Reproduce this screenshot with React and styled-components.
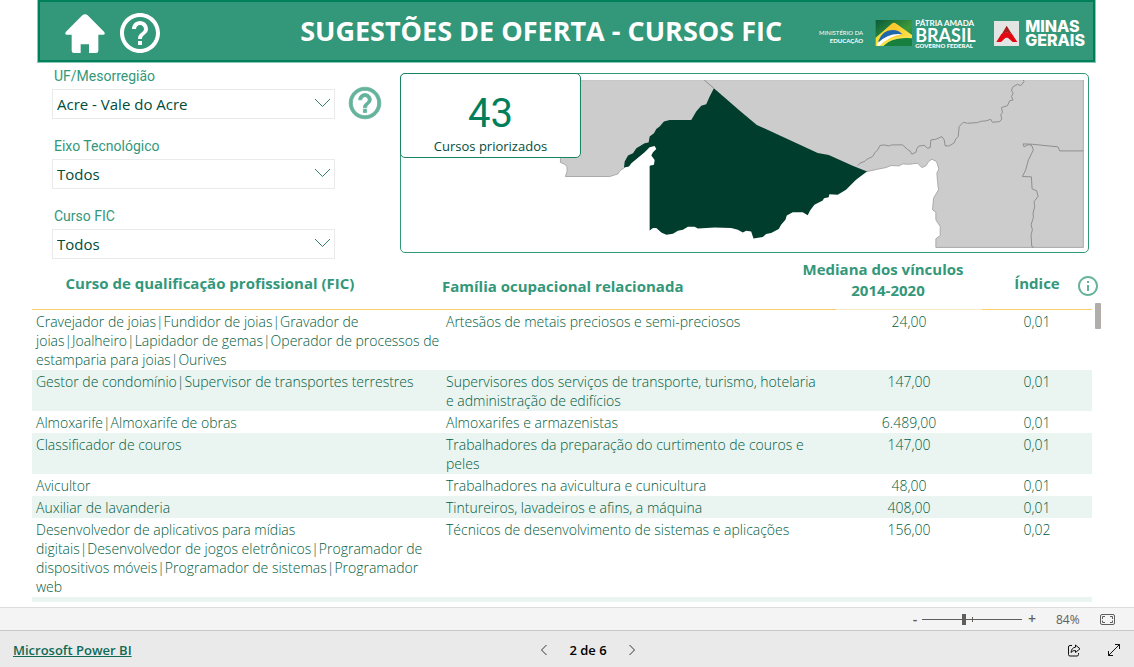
import React, { useState } from 'react';
import styled, { createGlobalStyle } from 'styled-components';
import { MdHelpOutline, MdInfoOutline } from 'react-icons/md';

const GlobalStyle = createGlobalStyle`
  * {
    box-sizing: border-box;
  }

  body {
    margin: 0;
    background-color: #fff;
    font-family: 'Open Sans', 'Noto Sans', sans-serif;
  }

  button {
    padding: 0;
    border: none;
    background: none;
    color: inherit;
    font: inherit;
    cursor: pointer;
  }

  svg {
    display: block;
  }
`;

const Page = styled.div`
  display: flex;
  flex-direction: column;
  height: 100vh;
`;

const Report = styled.main`
  display: flex;
  flex-direction: column;
  flex: 1;
  min-height: 0;
  padding-bottom: 5px;
`;

const HeaderContainer = styled.header`
  display: flex;
  align-items: center;
  height: 62px;
  margin: 0 39px 0 38px;
  padding: 4px 8px 0 24px;
  border: 2px solid #00805a;
  outline: 1px solid #8cc8b5;
  background-color: #33977a;
  color: #fff;
`;

const HeaderButtons = styled.div`
  display: flex;
  align-items: center;
  gap: 10px;
`;

const Title = styled.h1`
  flex: 1;
  margin: 0;
  padding: 0 37px 4px 0;
  font-size: 27px;
  line-height: 36px;
  font-weight: 700;
  text-align: right;
  white-space: nowrap;
`;

const Logos = styled.div`
  display: flex;
  align-items: center;
`;

const Ministry = styled.div`
  margin-right: 12px;
  padding-top: 8px;
  font-family: Lato, sans-serif;
  font-size: 6px;
  line-height: 8px;
  text-align: right;
  white-space: nowrap;
`;

const Brazil = styled.div`
  display: flex;
  flex-direction: column;
  width: 63px;
  margin: 0 16px 0 2px;
  font-family: Lato, sans-serif;
  white-space: nowrap;

  .motto {
    font-size: 8px;
    line-height: 10px;
    font-weight: 700;
  }

  .country {
    font-size: 18px;
    line-height: 15px;
    font-weight: 700;
  }

  .government {
    font-size: 6px;
    line-height: 6px;
    font-weight: 900;
  }
`;

const Minas = styled.div`
  margin-left: 6px;
  font-family: Inter, sans-serif;
  font-size: 16px;
  line-height: 14px;
  font-weight: 800;
`;

const Overview = styled.section`
  display: flex;
  align-items: flex-start;
  padding: 11px 45px 0 52px;
`;

const Filters = styled.div`
  display: flex;
  flex-direction: column;
  gap: 18px;
  width: 283px;
  margin-top: -6px;
`;

const Field = styled.div`
  label {
    display: block;
    height: 22px;
    padding: 0 2px;
    color: #33977a;
    font-family: Roboto, sans-serif;
    font-size: 14px;
    line-height: 18px;
  }
`;

const SelectBox = styled.div`
  position: relative;

  select {
    display: block;
    width: 100%;
    height: 30px;
    padding: 0 30px 0 4px;
    border: 1px solid #eaeaea;
    border-radius: 0;
    background-color: #fff;
    color: #004d3a;
    font-family: inherit;
    font-size: 15px;
    appearance: none;
  }

  svg {
    position: absolute;
    top: 9px;
    right: 4px;
    pointer-events: none;
  }
`;

const FilterHelp = styled.button`
  margin: 11px 16px 0 11px;
  color: #66b39c;

  path:first-child {
    stroke: none;
  }

  path:last-child {
    stroke: currentColor;
    stroke-width: 0.5;
  }
`;

const MapPanel = styled.div`
  position: relative;
  flex: 1;
  padding: 6px 4px 4px 6px;
  border: 1px solid #33977a;
  border-radius: 5px;

  > svg {
    width: 100%;
    height: auto;
  }
`;

const CountCard = styled.div`
  position: absolute;
  top: -1px;
  left: -1px;
  width: 181px;
  height: 85px;
  padding-top: 19px;
  border: 1px solid #1a8364;
  border-radius: 5px;
  background-color: #fff;
  text-align: center;

  strong {
    display: block;
    color: #00805a;
    font-family: Roboto, sans-serif;
    font-size: 40px;
    line-height: 42px;
    font-weight: 400;
  }

  span {
    display: block;
    color: #004d3a;
    font-size: 13px;
    line-height: 22px;
  }
`;

const TableArea = styled.section`
  position: relative;
  display: flex;
  flex: 1;
  min-height: 0;
  margin: 0 33px 0 32px;
  overflow: hidden;
`;

const Table = styled.table`
  flex: 1;
  align-self: flex-start;
  width: 100%;
  border-collapse: collapse;
  table-layout: fixed;
  color: #005c3e;
  font-size: 14px;
  line-height: 19px;

  .course {
    width: 410px;
  }

  .median {
    width: 146px;
  }

  .index {
    width: 110px;
  }

  th {
    height: 50px;
    padding: 0;
    border-bottom: 1px solid #fbce6b;
    color: #33977a;
    font-size: 15px;
    line-height: 21px;
    font-weight: 700;
  }

  th:nth-child(1) {
    padding-right: 54px;
  }

  th:nth-child(2) {
    padding-top: 6px;
    text-align: left;
  }

  th:nth-child(3) {
    padding-bottom: 7px;
    border-bottom-color: #fdebc4;
  }

  th span {
    display: block;
    margin-left: -52px;
    white-space: nowrap;
  }

  .period {
    margin-left: -42px;
  }

  td {
    padding: 2px 0 1px 4px;
    font-weight: 300;
    vertical-align: top;
  }

  td:nth-child(2) {
    padding-right: 12px;
  }

  td:nth-child(n + 3) {
    padding-left: 0;
    text-align: center;
  }

  tbody tr:nth-child(even) {
    background-color: #eaf4f1;
  }
`;

const InfoButton = styled.button`
  position: absolute;
  top: 15px;
  right: 1px;
  color: #66b39c;
`;

const ScrollThumb = styled.div`
  flex: none;
  width: 6px;
  height: 26px;
  margin: 44px 0 0 3px;
  border-radius: 1px;
  background-color: #b0adab;
`;

const ZoomBar = styled.div`
  display: flex;
  align-items: center;
  justify-content: flex-end;
  height: 23px;
  padding-right: 19px;
  border-top: 1px solid #dcdcdc;
  background-color: #f4f4f4;
  color: #605e5c;
  font-size: 12px;

  .step {
    width: 10px;
    font-size: 14px;
    line-height: 20px;
    font-weight: 600;
  }

  output {
    width: 24px;
    margin: 0 20px 0 19px;
  }
`;

const ZoomSlider = styled.input`
  width: 100px;
  height: 12px;
  margin: 0 5px 0 2px;
  background:
    linear-gradient(#605e5c, #605e5c) 50px 50% / 1px 5px no-repeat,
    linear-gradient(#605e5c, #605e5c) 0 50% / 100% 1px no-repeat;
  appearance: none;

  &::-webkit-slider-thumb {
    width: 4px;
    height: 11px;
    background-color: #605e5c;
    appearance: none;
  }
`;

const Footer = styled.footer`
  display: grid;
  grid-template-columns: 1fr auto 1fr;
  align-items: center;
  height: 37px;
  padding: 2px 13px 0;
  border-top: 1px solid #c8c8c8;
  background-color: #eaeaea;
  font-size: 13px;

  a {
    color: #0f6a58;
    font-weight: 600;
  }
`;

const Pager = styled.nav`
  display: flex;
  align-items: center;
  gap: 21px;
  margin-left: 42px;
  color: #000;
  font-weight: 600;
`;

const FooterActions = styled.div`
  display: flex;
  justify-content: flex-end;
  gap: 26px;
`;

const filters = [
  { id: 'regiao', label: 'UF/Mesorregião', value: 'Acre - Vale do Acre' },
  { id: 'eixo', label: 'Eixo Tecnológico', value: 'Todos' },
  { id: 'curso', label: 'Curso FIC', value: 'Todos' },
];

const rows = [
  [
    'Cravejador de joias|Fundidor de joias|Gravador de joias|Joalheiro|Lapidador de gemas|Operador de processos de estamparia para joias|Ourives',
    'Artesãos de metais preciosos e semi-preciosos',
    '24,00',
    '0,01',
  ],
  [
    'Gestor de condomínio|Supervisor de transportes terrestres',
    'Supervisores dos serviços de transporte, turismo, hotelaria e administração de edifícios',
    '147,00',
    '0,01',
  ],
  ['Almoxarife|Almoxarife de obras', 'Almoxarifes e armazenistas', '6.489,00', '0,01'],
  [
    'Classificador de couros',
    'Trabalhadores da preparação do curtimento de couros e peles',
    '147,00',
    '0,01',
  ],
  ['Avicultor', 'Trabalhadores na avicultura e cunicultura', '48,00', '0,01'],
  ['Auxiliar de lavanderia', 'Tintureiros, lavadeiros e afins, a máquina', '408,00', '0,01'],
  [
    'Desenvolvedor de aplicativos para mídias digitais|Desenvolvedor de jogos eletrônicos|Programador de dispositivos móveis|Programador de sistemas|Programador web',
    'Técnicos de desenvolvimento de sistemas e aplicações',
    '156,00',
    '0,02',
  ],
  ['\u00a0', '', '', ''],
];

const HomeIcon = () => (
  <svg width="42" height="41" viewBox="100 38 126 123" fill="currentColor">
    <path d="M155 45q8-7 16 0l49 49q6 8-3 9h-14v48q0 7-7 7h-21v-26h-25v26h-20q-7 0-7-7v-48h-14q-9-1-3-9z" />
  </svg>
);

const FlagIcon = () => (
  <svg width="38" height="28" viewBox="0 0 114 84">
    <defs>
      <linearGradient id="flagGreen" x1="0" y1="0" x2="1" y2="1">
        <stop offset="0" stopColor="#0a5a3a" />
        <stop offset=".6" stopColor="#3f9a3c" />
        <stop offset="1" stopColor="#0f7a3e" />
      </linearGradient>
      <linearGradient id="flagGold" x1="0" y1="0" x2="1" y2="0">
        <stop offset="0" stopColor="#f3e23a" />
        <stop offset=".5" stopColor="#fcc62c" />
        <stop offset="1" stopColor="#fbe54e" />
      </linearGradient>
    </defs>
    <path d="M2 3h109v78H2z" fill="url(#flagGreen)" />
    <path d="M2 56L50 14q7-5 14 0l47 34v12L60 64 14 81H2z" fill="url(#flagGold)" />
    <path d="M10 66Q22 34 52 33q20 0 30 13Q44 46 14 76z" fill="#1f66ad" />
    <path d="M8 72Q42 40 82 46 46 50 16 80H6z" fill="#fff" />
    <path d="M20 81q30-28 91-24v24z" fill="#17803f" />
    <path d="M14 81q30-35 97-29v6q-60-5-86 23z" fill="#f7e04a" />
  </svg>
);

const MinasIcon = () => (
  <svg width="25" height="25" viewBox="0 0 75 75">
    <path d="M0 0h75v75H0z" fill="#e3e5e5" />
    <path d="M38 14l16 26-16-6-15 6z" fill="#a91d18" />
    <path d="M22 39l16 8 16-8 16 24H56L38 47 21 63H7z" fill="#e30613" />
    <path d="M38 33l16 6v10L38 50 22 49V39z" fill="#e30613" />
  </svg>
);

const Chevron = () => (
  <svg width="17" height="10" viewBox="0 0 17 10" fill="none" stroke="#33806a">
    <path d="M1 1l7.500 7.500L16 1" />
  </svg>
);

const RegionMap = () => (
  <svg viewBox="36 45 2034 504" role="img" aria-label="Mapa do Vale do Acre">
    <path
      d="M490 44H2068V548H1625V522L1638 512 1638 485 1625 465V442L1615 435 1618 400 1633 375 1630 350 1628 325 1634 312 1627 290 1613 283 1603 290 1595 303 1583 308 1570 295 1545 298 1525 297 1515 303 1490 302 1475 308 1450 313 1418 320 1000 250 765 232 740 243 700 285 690 308 675 318 670 327 645 335H512L517 320V305L508 297 497 293V280z"
      fill="#ccc"
      stroke="#aaa"
      strokeWidth="3"
    />
    <path
      d="M958 70L1035 137 1087 180 1270 264 1303 270 1375 303 1418 320 1385 345 1355 375 1330 390 1305 388 1303 397 1289 400 1285 407 1260 420 1247 437 1240 451 1225 442 1195 442 1177 452 1173 465 1160 480 1153 493 1130 505 1115 508 1105 517 1077 521 1070 500 1055 498 1045 503 1030 495 1010 490 960 488 910 491 900 486 880 486 865 495 850 498 835 507 815 510 800 503 785 490 775 490 765 497V303L778 300 780 285 770 272 775 262 785 252 780 243 765 247 750 262 710 295 703 305 688 308 690 290 700 272 715 265 725 250 750 235 762 233 765 215 778 205 785 192 795 185 808 170 825 165H890L905 140 920 122 935 118 945 95z"
      fill="#003d2c"
    />
    <g fill="none" stroke="#8f8f8f" strokeWidth="3" strokeLinejoin="round">
      <path d="M928 44L958 70" />
      <path d="M1390 302L1397 295 1412 289 1418 283 1435 275 1442 263 1450 255 1457 242 1468 240 1485 243 1492 240 1525 240 1540 254 1547 258 1553 268 1565 262 1568 251 1573 244 1590 241 1600 250 1608 248 1610 225 1625 223 1643 215 1650 225 1653 243 1665 243 1680 234 1685 222 1692 215 1695 185 1707 172 1720 175 1750 173 1760 169 1775 168 1790 163 1795 172 1817 170 1823 162 1820 150 1825 142 1822 128 1840 122 1847 107 1857 105 1852 95 1857 85 1852 75 1857 65 1870 58 1880 62 1890 50 1887 44" />
      <path d="M2068 258H1997L1992 246 1915 238 1887 237 1890 246 1900 240 1912 240 1918 255 1903 285 1895 315 1885 335 1912 336 1914 372 1928 378 1932 395 1920 410 1922 425 1917 445 1918 458 1911 480 1915 495 1911 510 1913 545 1919 548" />
    </g>
  </svg>
);

const FitIcon = () => (
  <svg width="15" height="11" viewBox="0 0 15 11" fill="none" stroke="#605e5c">
    <rect x=".5" y=".5" width="14" height="10" rx="1.500" />
    <path d="M5 2.500H2.500V5M2.500 6.500v2H5M10 2.500h2.500V5M12.500 6.500v2H10" />
  </svg>
);

const ArrowIcon = ({ left }) => (
  <svg width="8" height="12" viewBox="0 0 8 12" fill="none" stroke="#333">
    <path d={left ? 'M6.500 1l-5 5 5 5' : 'M1.500 1l5 5-5 5'} />
  </svg>
);

const ShareIcon = () => (
  <svg width="14" height="13" viewBox="0 0 14 13" fill="none" stroke="#111">
    <path d="M5 1.500H3Q1.500 1.500 1.500 3v7.500Q1.500 12 3 12h7q1.500 0 1.500-1.500V9" />
    <path d="M8.500 1l4.500 3.800-4.500 3.700V6.500Q5.500 6.300 4 8.500 4.500 3.600 8.500 3.200z" />
  </svg>
);

const ExpandIcon = () => (
  <svg width="14" height="14" viewBox="0 0 14 14" fill="none" stroke="#111">
    <path d="M1.500 12.500l11-11M8 1.500h4.500V6M1.500 8v4.500H6" />
  </svg>
);

const Header = () => (
  <HeaderContainer>
    <HeaderButtons>
      <button type="button" aria-label="Início">
        <HomeIcon />
      </button>
      <button type="button" aria-label="Ajuda">
        <MdHelpOutline size={48} />
      </button>
    </HeaderButtons>
    <Title>SUGESTÕES DE OFERTA - CURSOS FIC</Title>
    <Logos>
      <Ministry>
        MINISTÉRIO DA
        <br />
        <b>EDUCAÇÃO</b>
      </Ministry>
      <FlagIcon />
      <Brazil>
        <span className="motto">PÁTRIA AMADA</span>
        <span className="country">BRASIL</span>
        <span className="government">GOVERNO FEDERAL</span>
      </Brazil>
      <MinasIcon />
      <Minas>
        MINAS
        <br />
        GERAIS
      </Minas>
    </Logos>
  </HeaderContainer>
);

const App = () => {
  const [zoom, setZoom] = useState(42);

  return (
    <Page>
      <GlobalStyle />
      <Report>
        <Header />
        <Overview>
          <Filters>
            {filters.map(filter => (
              <Field key={filter.id}>
                <label htmlFor={filter.id}>{filter.label}</label>
                <SelectBox>
                  <select id={filter.id}>
                    <option>{filter.value}</option>
                  </select>
                  <Chevron />
                </SelectBox>
              </Field>
            ))}
          </Filters>
          <FilterHelp type="button" aria-label="Ajuda sobre os filtros">
            <MdHelpOutline size={38} />
          </FilterHelp>
          <MapPanel>
            <RegionMap />
            <CountCard>
              <strong>43</strong>
              <span>Cursos priorizados</span>
            </CountCard>
          </MapPanel>
        </Overview>
        <TableArea>
          <Table>
            <colgroup>
              <col className="course" />
              <col />
              <col className="median" />
              <col className="index" />
            </colgroup>
            <thead>
              <tr>
                <th>Curso de qualificação profissional (FIC)</th>
                <th>Família ocupacional relacionada</th>
                <th>
                  <span>Mediana dos vínculos</span>
                  <span className="period">2014-2020</span>
                </th>
                <th>Índice</th>
              </tr>
            </thead>
            <tbody>
              {rows.map((row, idx) => (
                <tr key={idx}>
                  {row.map((cell, col) => (
                    <td key={col}>{cell}</td>
                  ))}
                </tr>
              ))}
            </tbody>
          </Table>
          <ScrollThumb />
          <InfoButton type="button" aria-label="Informações">
            <MdInfoOutline size={24} />
          </InfoButton>
        </TableArea>
      </Report>
      <ZoomBar>
        <button type="button" className="step" aria-label="Reduzir">
          -
        </button>
        <ZoomSlider
          type="range"
          aria-label="Zoom"
          value={zoom}
          onChange={e => setZoom(Number(e.target.value))}
        />
        <button type="button" className="step" aria-label="Ampliar">
          +
        </button>
        <output>{zoom * 2}%</output>
        <button type="button" aria-label="Ajustar à página">
          <FitIcon />
        </button>
      </ZoomBar>
      <Footer>
        <div>
          <a href="#powerbi">Microsoft Power BI</a>
        </div>
        <Pager>
          <button type="button" aria-label="Página anterior">
            <ArrowIcon left />
          </button>
          <span>2 de 6</span>
          <button type="button" aria-label="Próxima página">
            <ArrowIcon />
          </button>
        </Pager>
        <FooterActions>
          <button type="button" aria-label="Compartilhar">
            <ShareIcon />
          </button>
          <button type="button" aria-label="Tela inteira">
            <ExpandIcon />
          </button>
        </FooterActions>
      </Footer>
    </Page>
  );
};

export default App;
